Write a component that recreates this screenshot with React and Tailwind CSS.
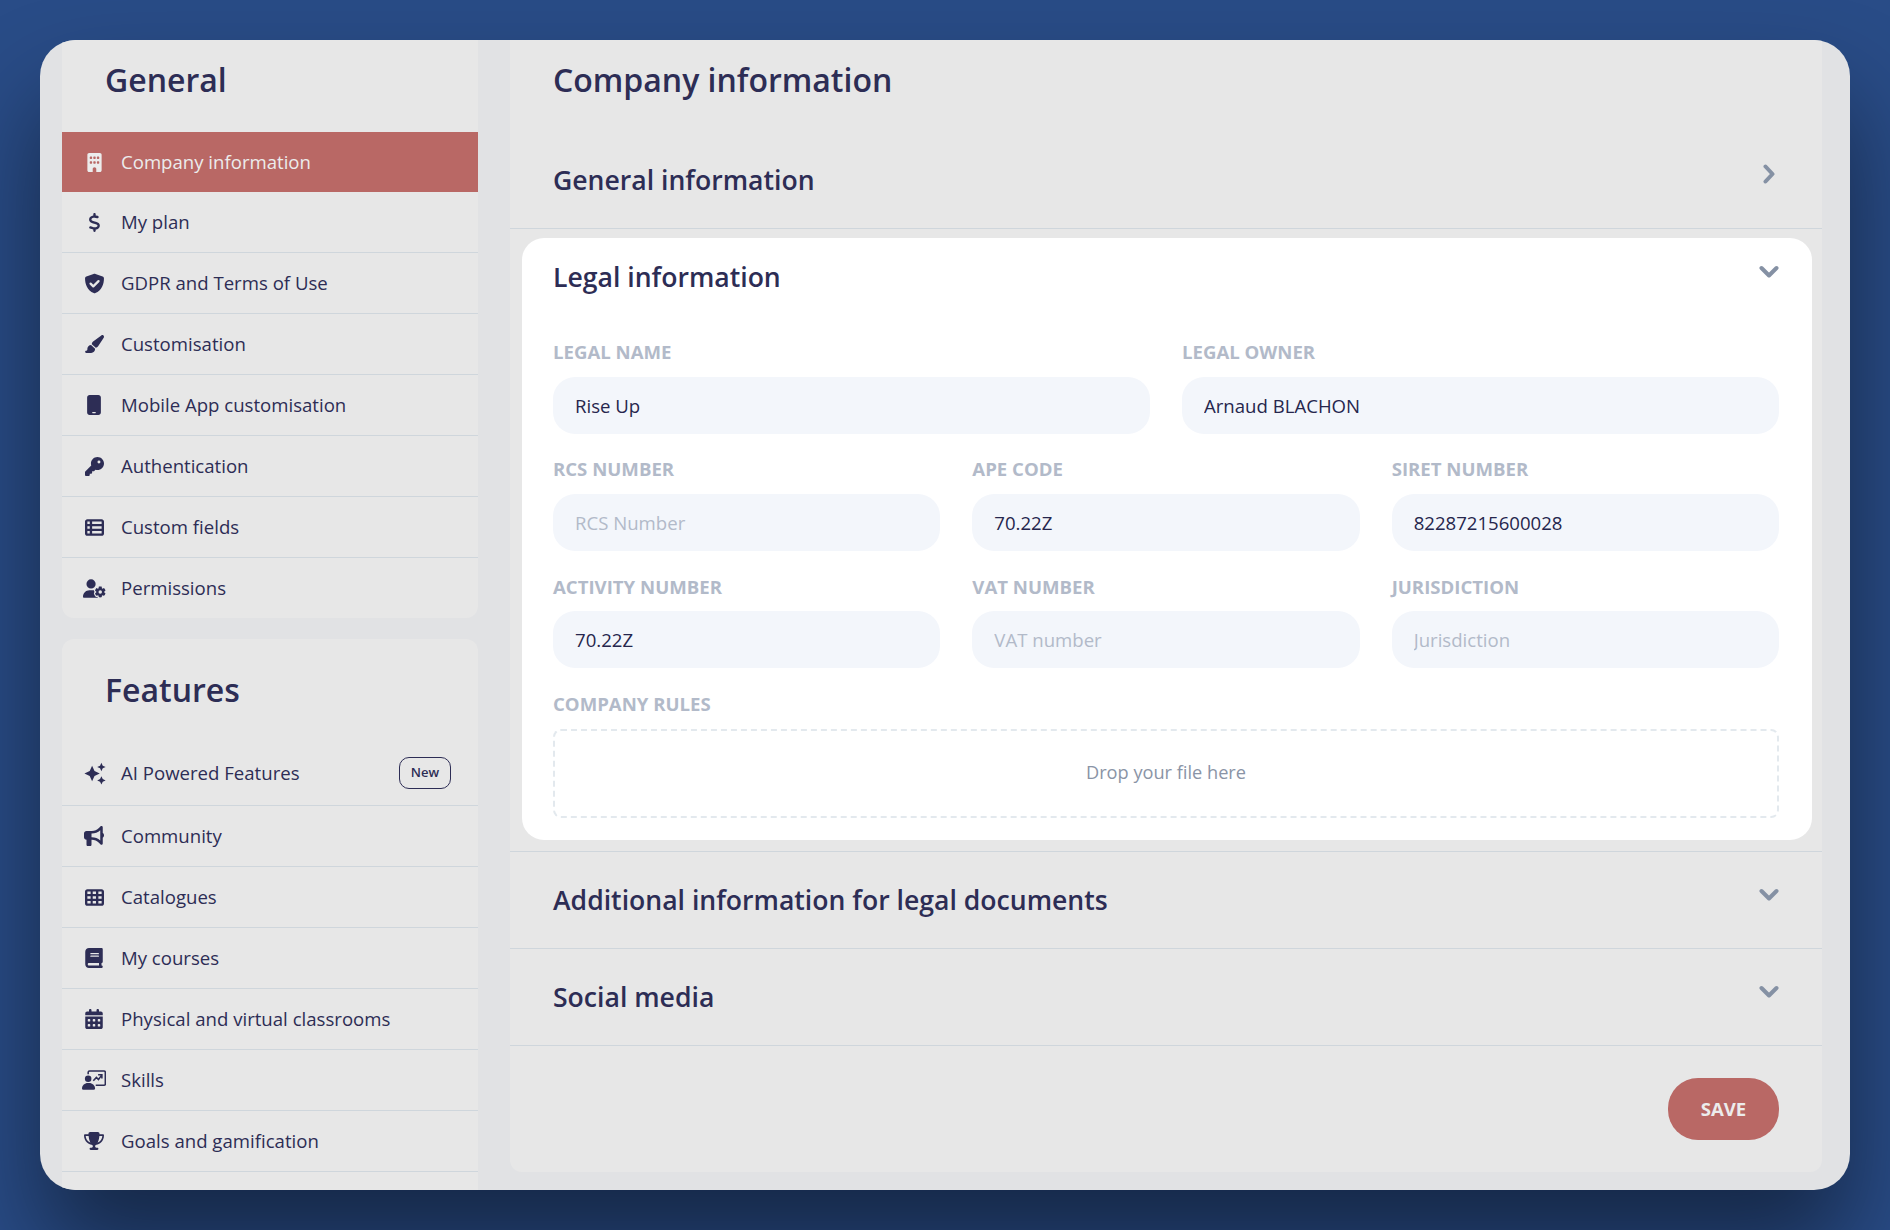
import React from "react";
import {
  FaBuilding,
  FaDollarSign,
  FaMobile,
  FaKey,
  FaTableList,
  FaUserGear,
  FaBullhorn,
  FaTableCells,
  FaBook,
  FaCalendarDays,
  FaTrophy,
  FaPaintbrush,
} from "react-icons/fa6";

const ShieldCheck = ({ className }) => (
  <svg viewBox="0 0 24 24" className={className}>
    <path
      fill="currentColor"
      d="M12 .8c.4 0 .8.1 1.100.2l8.200 3.100c.9.3 1.500 1.200 1.500 2.100 0 6.300-2.400 13.500-9.800 16.700-.6.300-1.300.3-1.900 0C3.700 19.700 1.200 12.500 1.200 6.200c0-.9.6-1.800 1.500-2.100L10.900 1c.3-.1.700-.2 1.100-.2z"
    />
    <path d="M7.500 12.200l3.100 3.100 6-6" fill="none" stroke="#e7e7e7" strokeWidth="2.600" strokeLinecap="round" strokeLinejoin="round" />
  </svg>
);

const Sparkles = ({ className }) => (
  <svg viewBox="0 0 24 24" fill="currentColor" className={className}>
    <path d="M9.500 4l2.500 5.500L17.500 12 12 14.500 9.500 20 7 14.500 1.500 12 7 9.500z" />
    <path d="M19.200 .8l1.400 3 3 1.400-3 1.400-1.400 3-1.400-3-3-1.400 3-1.400z" />
    <path d="M19.200 14.800l1.400 3 3 1.400-3 1.400-1.400 3-1.400-3-3-1.400 3-1.400z" />
  </svg>
);

// board with a small rising arrow, person in front
const Presentation = ({ className }) => (
  <svg viewBox="0 0 70 57" className={className}>
    <path d="M18 12V6a4 4 0 0 1 4-4h42a4 4 0 0 1 4 4v34a4 4 0 0 1-4 4H40" fill="none" stroke="currentColor" strokeWidth="4.500" />
    <circle cx="18" cy="25" r="9.500" fill="currentColor" />
    <path
      fill="currentColor"
      d="M0 53c0-9 8-16 17-16h4c9 0 17 7 17 16a4 4 0 0 1-4 4H4a4 4 0 0 1-4-4z"
    />
    <path d="M33 31l9-10 6 6 9-12M47 13h11v11" fill="none" stroke="currentColor" strokeWidth="4.500" />
  </svg>
);

const Chevron = ({ right }) => (
  <svg
    viewBox="0 0 20 20"
    className={right ? "w-5 h-5 -mt-3 text-[#8591a4]" : "w-5 h-5 -mt-[10px] text-[#8591a4]"}
    fill="none"
    stroke="currentColor"
    strokeWidth="4"
    strokeLinecap="round"
    strokeLinejoin="round"
  >
    <path d={right ? "M6.500 2.500l7 7.500-7 7.500" : "M2.500 6l7.500 7.500L17.500 6"} />
  </svg>
);

const generalItems = [
  { label: "Company information", icon: <FaBuilding />, active: true },
  { label: "My plan", icon: <FaDollarSign /> },
  { label: "GDPR and Terms of Use", icon: <ShieldCheck className="w-[21px] h-[21px]" /> },
  { label: "Customisation", icon: <FaPaintbrush className="text-[20px]" /> },
  { label: "Mobile App customisation", icon: <FaMobile className="text-[20px]" /> },
  { label: "Authentication", icon: <FaKey /> },
  { label: "Custom fields", icon: <FaTableList /> },
  { label: "Permissions", icon: <FaUserGear className="text-[23px]" />, last: true },
];

const featureItems = [
  { label: "Community", icon: <FaBullhorn className="text-[20px]" /> },
  { label: "Catalogues", icon: <FaTableCells /> },
  { label: "My courses", icon: <FaBook className="text-[20px]" /> },
  { label: "Physical and virtual classrooms", icon: <FaCalendarDays className="text-[20px]" /> },
  { label: "Skills", icon: <Presentation className="w-[24px] h-[20px]" /> },
  { label: "Goals and gamification", icon: <FaTrophy className="text-[20px]" /> },
];

const NavItem = ({ label, icon, active, last }) => (
  <div
    className={
      active
        ? "h-[60px] flex items-center pl-5 gap-[15px] bg-[#b96865] text-[#ececec]"
        : last
        ? "h-[60px] flex items-center pl-5 gap-[15px] text-[#2d2d55]"
        : "h-[61px] flex items-center pl-5 gap-[15px] border-b border-[#cfd6dc] text-[#2d2d55]"
    }
  >
    <span className="w-6 flex justify-center text-[19px]">{icon}</span>
    <span className="text-[18.6px]">{label}</span>
  </div>
);

const Field = ({ label, value, placeholder, tight }) => (
  <div>
    <div
      className={
        tight
          ? "h-6 mt-px mb-3 flex items-center text-[18.6px] font-bold uppercase text-[#b2bac9]"
          : "h-6 mb-[13px] flex items-center text-[18.6px] font-bold uppercase text-[#b2bac9]"
      }
    >
      {label}
    </div>
    <input
      readOnly
      value={value || ""}
      placeholder={placeholder}
      className="w-full h-[57px] rounded-[22px] bg-[#f3f6fb] px-[22px] text-[18.6px] text-[#26264d] outline-none placeholder:text-[#b2bac9]"
    />
  </div>
);

const Section = ({ title, chevronRight }) => (
  <div className="h-[97px] flex items-center justify-between pl-[43px] pr-[43px] border-b border-[#cfd6dc]">
    <h2 className="pt-0.5 text-[26.6px] font-semibold text-[#2d2d55]">{title}</h2>
    <Chevron right={chevronRight} />
  </div>
);

export default function App() {
  return (
    <div
      className="h-[1230px] p-10 bg-[#294c87] overflow-hidden"
      style={{ fontFamily: '"Open Sans", sans-serif' }}
    >
      <div className="h-[1150px] rounded-[36px] bg-[#e1e2e4] overflow-hidden flex gap-8 pl-[22px] pr-[28px] shadow-[0_60px_100px_0_rgba(0,0,0,0.48)]">
        {/* sidebar */}
        <div className="w-[416px] shrink-0 flex flex-col gap-[21px]">
          <div className="bg-[#e7e7e7] rounded-b-xl overflow-hidden">
            <div className="h-[80px] mb-3 pl-[43px] flex items-center text-[32px] font-semibold text-[#2d2d55]">
              General
            </div>
            {generalItems.map((item) => (
              <NavItem key={item.label} {...item} />
            ))}
          </div>
          <div className="bg-[#e7e7e7] rounded-t-xl flex-1">
            <div className="h-[102px] pl-[43px] flex items-center text-[32px] font-semibold text-[#2d2d55]">
              Features
            </div>
            <div className="h-[65px] flex items-center pl-5 pr-[27px] gap-[15px] border-b border-[#cfd6dc] text-[#2d2d55]">
              <span className="w-6 flex justify-center">
                <Sparkles className="w-[23px] h-[23px]" />
              </span>
              <span className="text-[18.6px]">AI Powered Features</span>
              <span className="ml-auto w-[52px] h-[32px] flex items-center justify-center rounded-[10px] border border-[#2d2d55] text-[13px] font-semibold">
                New
              </span>
            </div>
            {featureItems.map((item) => (
              <NavItem key={item.label} {...item} />
            ))}
          </div>
        </div>

        {/* main */}
        <div className="flex-1 h-[1132px] bg-[#e7e7e7] rounded-b-xl">
          <div className="h-[80px] mb-3 pl-[43px] flex items-center text-[32px] font-semibold text-[#2d2d55]">
            Company information
          </div>
          <Section title="General information" chevronRight />

          <div className="pt-[9px] pb-[11px] pl-3 pr-2.5 border-b border-[#cfd6dc]">
            <div className="h-[602px] bg-white rounded-[22px] pl-[31px] pr-[33px]">
              <div className="h-[78px] flex items-center justify-between">
                <h2 className="pt-0.5 text-[26.6px] font-semibold text-[#2d2d55]">Legal information</h2>
                <Chevron />
              </div>
              <div className="pt-6 flex flex-col gap-[23px]">
                <div className="grid grid-cols-2 gap-x-8">
                  <Field label="Legal name" value="Rise Up" />
                  <Field label="Legal owner" value="Arnaud BLACHON" />
                </div>
                <div className="grid grid-cols-3 gap-x-8">
                  <Field label="RCS number" placeholder="RCS Number" />
                  <Field label="APE code" value="70.22Z" />
                  <Field label="Siret number" value="82287215600028" />
                </div>
                <div className="grid grid-cols-3 gap-x-8">
                  <Field tight label="Activity number" value="70.22Z" />
                  <Field tight label="VAT number" placeholder="VAT number" />
                  <Field tight label="Jurisdiction" placeholder="Jurisdiction" />
                </div>
                <div className="pt-px">
                  <div className="h-6 mb-[13px] flex items-center text-[18.6px] font-bold uppercase text-[#b2bac9]">
                    Company rules
                  </div>
                  <div className="h-[89px] pb-0.5 rounded-lg border-2 border-dashed border-[#e3e9ee] flex items-center justify-center text-[18.2px] text-[#8a94a6]">
                    Drop your file here
                  </div>
                </div>
              </div>
            </div>
          </div>

          <Section title="Additional information for legal documents" />
          <Section title="Social media" />

          <div className="pt-8 pr-[43px] flex justify-end">
            <button className="w-[111px] h-[62px] rounded-[30px] bg-[#b96865] text-[18.6px] font-bold text-[#ececec]">
              SAVE
            </button>
          </div>
        </div>
      </div>
    </div>
  );
}
